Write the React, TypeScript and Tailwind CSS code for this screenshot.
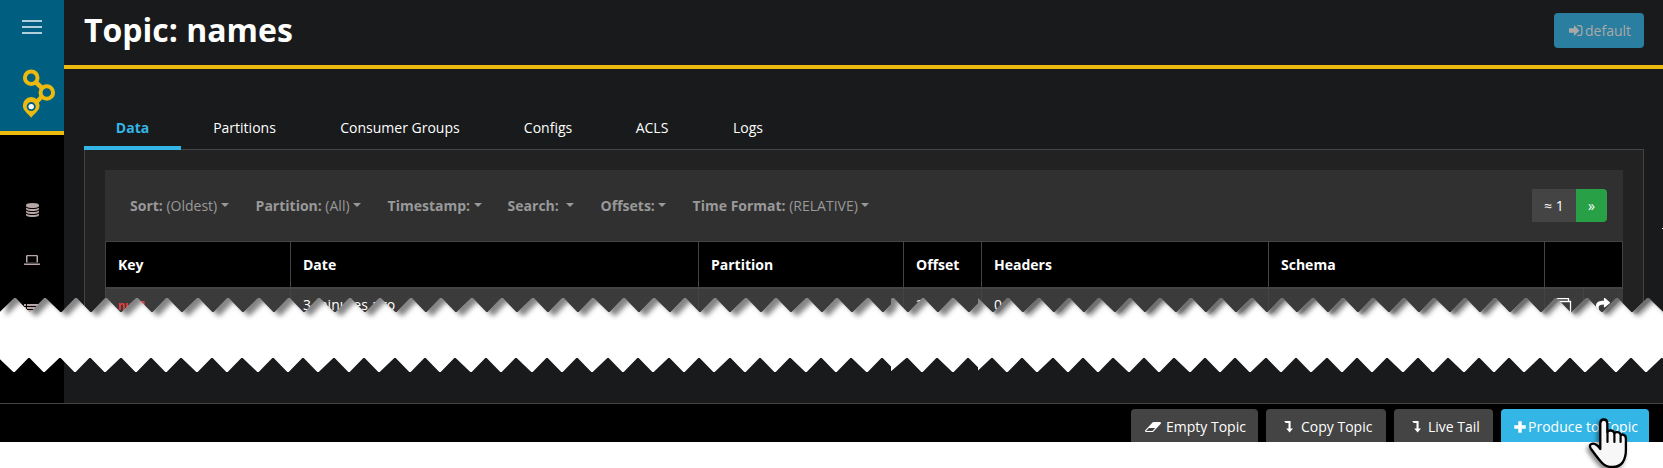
import React from "react";
import { FaShare } from "react-icons/fa";

const teeth = (
  start: number,
  end: number,
  firstPeak: number,
  period: number,
  peakY: number,
  valleyY: number,
) => {
  const pts: string[] = [];
  const half = period / 2;
  const yAt = (x: number) => {
    const d = Math.abs(((((x - firstPeak) % period) + period) % period) - half);
    return valleyY + ((peakY - valleyY) * d) / half;
  };
  pts.push(`${start},${yAt(start)}`);
  const n0 = Math.ceil((start + 1 - firstPeak) / half);
  for (let i = n0; firstPeak + i * half < end - 1; i++) {
    const x = Math.round(firstPeak + i * half);
    const y = i % 2 === 0 ? peakY : valleyY;
    pts.push(`${x - 0.7},${y}`, `${x + 0.7},${y}`);
  }
  pts.push(`${end},${yAt(end)}`);
  return pts;
};

const PERIOD = 30.45;
const topLeft = teeth(0, 891, 14.9, PERIOD, 0, 14);
const topMiddle = teeth(891, 978, 892.5, PERIOD, 0, 14);
const topRight = teeth(978, 1663, 977.6, PERIOD, 0, 14);
const topEdge = [...topLeft, ...topMiddle, ...topRight];
const bottomEdge = [
  ...teeth(0, 891, -1.3, PERIOD, 60, 74),
  ...teeth(891, 978, 907, PERIOD, 60, 74),
  ...teeth(978, 1663, 991.6, PERIOD, 60, 74),
];

function Tear() {
  const white = [...topEdge, ...[...bottomEdge].reverse()].join(" ");
  return (
    <svg className="absolute left-0 top-[298px] h-[75px] w-[1663px]" viewBox="0 0 1663 75">
      <defs>
        <clipPath id="tear">
          <polygon points={white} />
        </clipPath>
        <filter id="soft" x="-1%" y="-100%" width="102%" height="300%">
          <feGaussianBlur stdDeviation="2.6" />
        </filter>
        <filter id="edge" x="-1%" y="-100%" width="102%" height="300%">
          <feGaussianBlur stdDeviation="0.6" />
        </filter>
      </defs>
      <polygon points={white} fill="#fff" />
      <g clipPath="url(#tear)">
        <polygon
          points={["0,-20", ...topEdge, "1690,-20"].join(" ")}
          fill="#000"
          fillOpacity="0.48"
          filter="url(#soft)"
          transform="translate(6 4)"
        />
        <polygon
          points={["978,-20", ...topRight, "1690,-20"].join(" ")}
          fill="#000"
          fillOpacity="0.16"
          filter="url(#edge)"
          transform="translate(3.5 2.500)"
        />
      </g>
    </svg>
  );
}

function Logo() {
  return (
    <svg className="ml-[22px] mt-[34px] h-[52px] w-[34px]" viewBox="22 68 34 52" fill="none">
      <path d="M35 81.500L42 88M42 96.500L36 102.500" stroke="#ecb90f" strokeWidth="4.500" />
      <circle cx="31.200" cy="77.700" r="6.300" stroke="#ecb90f" strokeWidth="4" />
      <circle cx="46.800" cy="92.500" r="6.300" stroke="#ecb90f" strokeWidth="4" />
      <path d="M23 106.600a8.300 8.300 0 1 1 16.400 0c0 4-4.400 6.500-8.200 11.200c-3.800-4.700-8.200-7.200-8.200-11.200z" fill="#ecb90f" />
      <circle cx="31.200" cy="106.600" r="4.500" fill="#005f81" />
      <circle cx="31.200" cy="106.600" r="2.700" fill="#fff" />
    </svg>
  );
}

function DatabaseIcon() {
  return (
    <svg className="h-[14px] w-[13px]" viewBox="0 0 1536 1792" preserveAspectRatio="none" fill="#b8a5a5">
      <path d="M768 768q237 0 443-43t325-127v170q0 69-103 128t-280 93.500-385 34.500-385-34.500-280-93.500-103-128v-170q119 84 325 127t443 43zm0 768q237 0 443-43t325-127v170q0 69-103 128t-280 93.500-385 34.500-385-34.500-280-93.500-103-128v-170q119 84 325 127t443 43zm0-384q237 0 443-43t325-127v170q0 69-103 128t-280 93.500-385 34.500-385-34.500-280-93.500-103-128v-170q119 84 325 127t443 43zm0-1152q208 0 385 34.500t280 93.500 103 128v128q0 69-103 128t-280 93.500-385 34.500-385-34.500-280-93.500-103-128v-128q0-69 103-128t280-93.500 385-34.500z" />
    </svg>
  );
}

function LaptopIcon() {
  return (
    <svg className="h-[11px] w-4" viewBox="0 0 16 11" fill="#b8a5a5">
      <path fillRule="evenodd" d="M3.200 0h9.600q1.200 0 1.200 1.200v6.300H2V1.200Q2 0 3.200 0zM3.500 1.300v5.900h9V1.300zM0 8.500h16v.7q0 .9-1.300.9H1.300Q0 10.100 0 9.200z" />
    </svg>
  );
}

function ListIcon() {
  return (
    <svg className="h-3 w-4" viewBox="0 0 16 12" fill="#b8a5a5">
      <path d="M0 0h2v2H0zM3 0H16v2H3zM0 3h2v2H0zM3 3H16v2H3zM0 6h2v2H0zM3 6H16v2H3z" />
    </svg>
  );
}

function SignInIcon() {
  return (
    <svg className="h-[11px] w-[14px]" viewBox="0 0 14 11" fill="currentColor">
      <path d="M10.400 5.500L5 10.900V7.800H.7Q0 7.800 0 7.100V3.900Q0 3.200.7 3.200H5V.1z" />
      <path d="M8.300.6h2.400q2.200 0 2.200 2.200v5.400q0 2.200-2.200 2.200H8.300" fill="none" stroke="currentColor" strokeWidth="1.200" />
    </svg>
  );
}

function LevelDownIcon() {
  return (
    <svg className="h-3 w-[9px]" viewBox="0 0 9 12" fill="currentColor">
      <path d="M.2 0H6.600V7.400H9L5.600 11.600 2.200 7.400H4.500V2H1.700z" />
    </svg>
  );
}

function EraserIcon() {
  return (
    <svg className="h-[10px] w-[16px]" viewBox="64 256 1920 1280" preserveAspectRatio="none" fill="currentColor">
      <path d="M960 1408l336-384h-768l-336 384h768zm1013-1077q15 34 9.500 71.500t-30.500 65.500l-896 1024q-38 44-96 44h-768q-38 0-69.500-20.500t-47.500-54.500q-15-34-9.500-71.500t30.500-65.500l896-1024q38-44 96-44h768q38 0 69.500 20.500t47.500 54.500z" />
    </svg>
  );
}

function PlusIcon() {
  return (
    <svg className="h-3 w-3" viewBox="0 0 12 12" fill="none" stroke="currentColor" strokeWidth="3.400">
      <path d="M6 .3v11.400M.3 6h11.400" />
    </svg>
  );
}

function CopyIcon() {
  return (
    <svg className="h-4 w-4" viewBox="0 0 16 16" fill="none" stroke="#fff" strokeWidth="1.300">
      <path d="M3.500 3.500h11v12h-11zM1 12V.7h11.500v2.800" />
    </svg>
  );
}

function HandCursor() {
  return (
    <svg className="absolute left-[1582px] top-[416px] h-[52px] w-[48px] overflow-visible" viewBox="1583 416 48 52">
      <path
        d="M1601.300 449V423.200q0-3.700 3.500-3.700t3.500 3.700V432q1-1.700 3.600-1.500 2.800.2 3.400 2.700 1.200-1.300 3.300-1 2.600.4 3 2.700 1.400-.8 3.100 0 2.200 1 2.200 3.800V450q0 7-3 12-3.300 5-10.500 5-6.500 0-10.500-4.300-3-3.200-6-7.200l-5-6.800q-2-3.300.1-4.400 2.200-1.500 5.200.4 2 1.300 4.100 4.300z"
        fill="#f7f7f7"
        stroke="#000"
        strokeWidth="2.300"
        strokeLinejoin="round"
        className="drop-shadow-[-2px_3px_2px_rgba(0,0,0,0.45)]"
      />
      <path d="M1608.500 432v10M1615.400 434v8M1621.600 436v6" stroke="#000" strokeWidth="2.200" strokeLinecap="round" />
    </svg>
  );
}

const tabs = [
  ["Partitions", "w-[127px]"],
  ["Consumer Groups", "w-[184px]"],
  ["Configs", "w-[112px]"],
  ["ACLS", "w-[96px]"],
  ["Logs", "w-[96px]"],
];

const filters = [
  { label: "Sort:", value: "(Oldest)", width: "w-[125.6px]", pad: "pl-[3.6px]" },
  { label: "Partition:", value: "(All)", width: "w-[132px]", pad: "pl-[3.6px]" },
  { label: "Timestamp:", value: "", width: "w-[120px]", pad: "" },
  { label: "Search:", value: "", width: "w-[93px]", pad: "pl-[3.6px]" },
  { label: "Offsets:", value: "", width: "w-[92px]", pad: "" },
  { label: "Time Format:", value: "(RELATIVE)", width: "w-[190px]", pad: "pl-[3.6px]" },
];

const columns = ["Key", "Date", "Partition", "Offset", "Headers", "Schema", ""];
const grid = "grid grid-cols-[185px_408px_205px_78px_287px_276px_78px]";

export default function App() {
  return (
    <div className="relative h-[468px] w-[1663px] overflow-hidden bg-white font-['Open_Sans',sans-serif] text-[14px] leading-[21px] text-white">
      <div className="flex h-[403px]">
        <aside className="w-16 shrink-0 bg-black">
          <div className="h-[135px] border-b-4 border-[#ecb90f] bg-[#005f81] pt-5">
            <div className="ml-[22px] flex h-[14px] w-5 flex-col justify-between">
              <span className="h-0.5 bg-[#b0cfda]" />
              <span className="h-0.5 bg-[#b0cfda]" />
              <span className="h-0.5 bg-[#b0cfda]" />
            </div>
            <Logo />
          </div>
          <div className="flex flex-col items-center pt-[68px]">
            <DatabaseIcon />
            <div className="mt-[38px]"><LaptopIcon /></div>
            <div className="mt-[38px]"><ListIcon /></div>
          </div>
        </aside>
        <main className="flex-1 bg-[#181a1b]">
          <header className="flex h-[69px] items-start justify-between border-b-4 border-[#ecb90f] pl-5 pr-[19px]">
            <h1 className="pt-[10px] text-[32px] font-bold leading-[40px]">Topic: names</h1>
            <button className="mt-[13px] flex h-[35px] w-[90px] items-center rounded bg-[#2a7e9f] pl-[15px] text-[#aaa9a7]">
              <SignInIcon />
              <span className="ml-0.5">default</span>
            </button>
          </header>
          <nav className="ml-5 mt-[39px] flex h-[41px] w-[1560px]">
            <div className="relative z-10 h-[42px] w-[97px] border-b-4 border-[#33b5e5] pt-[9px] text-center font-bold text-[#33b5e5]">
              Data
            </div>
            {tabs.map(([name, width]) => (
              <div key={name} className={`${width} pt-[9px] text-center`}>{name}</div>
            ))}
          </nav>
          <section className="ml-5 h-[185px] w-[1560px] overflow-hidden border border-b-0 border-[#444] bg-[#222] px-5 pt-5">
            <div className="flex h-[71px] w-[1518px] items-start justify-between bg-[#303030] pl-[25px] pr-4 pt-[19px]">
              <div className="flex h-[33px] items-center text-[#999]">
                {filters.map((f) => (
                  <div key={f.label} className={`${f.width} flex items-center whitespace-nowrap`}>
                    <b>{f.label}</b>
                    <span className={f.pad}>{f.value}</span>
                    <span className="mb-0.5 ml-[3.6px] border-x-4 border-t-4 border-x-transparent border-t-[#999]" />
                  </div>
                ))}
              </div>
              <div className="flex h-[33px] overflow-hidden rounded-r text-center leading-[33px]">
                <span className="w-11 bg-[#444]">≈ 1</span>
                <span className="w-[31px] bg-[#28a045]">»</span>
              </div>
            </div>
            <div className="w-[1518px] border-l border-t border-[#444]">
              <div className={`${grid} h-[47px] border-b-2 border-[#444] bg-black font-bold leading-[45px]`}>
                {columns.map((c, i) => (
                  <div key={i} className="border-r border-[#444] pl-3">{c}</div>
                ))}
              </div>
              <div className={`${grid} h-[45px] bg-[#3b3b3b] leading-[32px]`}>
                <div className="border-r border-[#444] pl-3 pt-0.5 font-['Liberation_Mono',monospace] text-[12px] font-bold text-[#e83e3e]">null</div>
                <div className="border-r border-[#444] pl-3">3 minutes ago</div>
                <div className="border-r border-[#444] pl-3" />
                <div className="border-r border-[#444] pl-3">2</div>
                <div className="border-r border-[#444] pl-3">0</div>
                <div className="border-r border-[#444]" />
                <div className="flex">
                  <div className="w-[39px] border-r border-[#444] pl-[11px] pt-[9px]"><CopyIcon /></div>
                  <div className="pl-3 pt-[8px]"><FaShare size={14} /></div>
                </div>
              </div>
            </div>
          </section>
        </main>
      </div>
      <footer className="flex h-[39px] justify-end gap-2 overflow-hidden border-t border-[#444] bg-black pr-[14px] pt-[5px] leading-[35px]">
        <div className="flex h-[35px] w-[127px] items-center rounded-t bg-[#444] pl-[14px]">
          <EraserIcon />
          <span className="ml-[5px]">Empty Topic</span>
        </div>
        <div className="flex h-[35px] w-[120px] items-center rounded-t bg-[#444] pl-[18px]">
          <LevelDownIcon />
          <span className="ml-2">Copy Topic</span>
        </div>
        <div className="flex h-[35px] w-[99px] items-center rounded-t bg-[#444] pl-[18px]">
          <LevelDownIcon />
          <span className="ml-[7px]">Live Tail</span>
        </div>
        <div className="flex h-[35px] w-[148px] items-center rounded-t bg-[#33b5e5] pl-[13px]">
          <PlusIcon />
          <span className="ml-0.5">Produce to Topic</span>
        </div>
      </footer>
      <Tear />
      <HandCursor />
      <span className="absolute right-0 top-[228px] h-px w-px bg-white" />
    </div>
  );
}
